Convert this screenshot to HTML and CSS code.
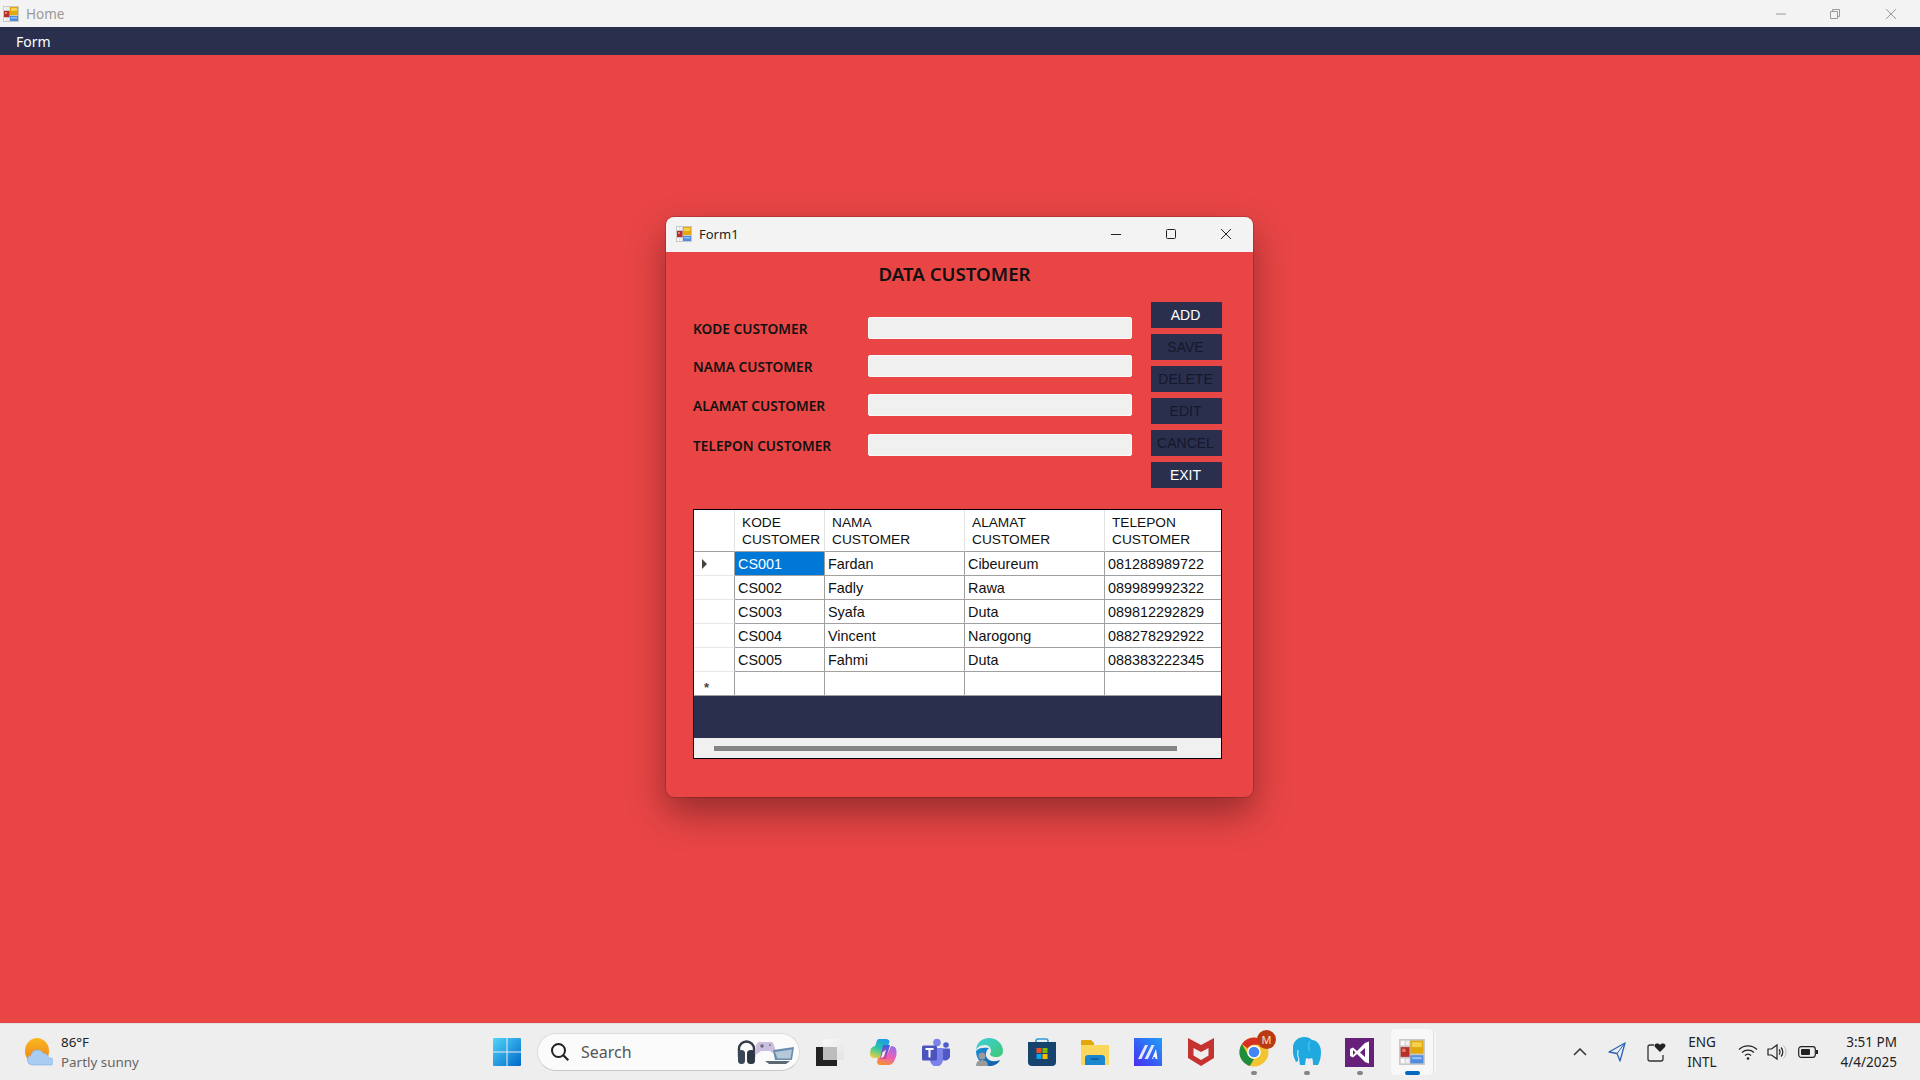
FILE: index.html
```html
<!DOCTYPE html>
<html lang="en">
<head>
    <meta charset="UTF-8" />
    <title>Home</title>
    <link rel="stylesheet" href="styles.css">
</head>
<body>
    <svg class="defs" width="0" height="0">
        <symbol id="appicon" viewBox="0 0 16 16">
            <rect x="0" y="0" width="16" height="16" fill="#c8c8c8"/>
            <rect x="1" y="1" width="2.500" height="3" fill="#fafafa"/>
            <rect x="4" y="1" width="2.500" height="3" fill="#eeeeee"/>
            <rect x="1" y="5" width="5.500" height="6" fill="#b8302a"/>
            <rect x="2" y="6" width="2" height="2" fill="#e88070"/>
            <rect x="1" y="12" width="2.500" height="3" fill="#fafafa"/>
            <rect x="4" y="12" width="2.500" height="3" fill="#eeeeee"/>
            <rect x="7" y="1" width="8" height="8" fill="#e2a80c"/>
            <rect x="8" y="2" width="6" height="3" fill="#f6d050"/>
            <rect x="7" y="10" width="8" height="5" fill="#4f8ce0"/>
            <rect x="8" y="11" width="6" height="1.500" fill="#90bcf0"/>
        </symbol>
    </svg>

    <div class="titlebar">
        <svg class="app-icon"><use href="#appicon"/></svg>
        <span class="titlebar-text">Home</span>
        <div class="main-controls">
            <span class="main-ctl"><svg width="12" height="12" viewBox="0 0 12 12"><path d="M1 6h10" stroke="#999" fill="none"/></svg></span>
            <span class="main-ctl"><svg width="12" height="12" viewBox="0 0 12 12"><path d="M1.500 3.500h7v7h-7zM3.500 3.500v-2h7v7h-2" stroke="#999" fill="none"/></svg></span>
            <span class="main-ctl"><svg width="12" height="12" viewBox="0 0 12 12"><path d="M1 1l10 10M11 1l-10 10" stroke="#999" fill="none"/></svg></span>
        </div>
    </div>
    <div class="menubar"><span class="menu-item">Form</span></div>

    <div class="desktop">
        <div class="window">
            <div class="win-title">
                <svg class="app-icon"><use href="#appicon"/></svg>
                <span class="win-title-text">Form1</span>
                <div class="win-controls">
                    <span class="win-ctl"><svg width="12" height="12" viewBox="0 0 12 12"><path d="M1 6.500h10" stroke="#222" fill="none"/></svg></span>
                    <span class="win-ctl"><svg width="12" height="12" viewBox="0 0 12 12"><rect x="1.500" y="1.500" width="9" height="9" rx="1" stroke="#222" fill="none"/></svg></span>
                    <span class="win-ctl"><svg width="12" height="12" viewBox="0 0 12 12"><path d="M1 1l10 10M11 1l-10 10" stroke="#222" fill="none"/></svg></span>
                </div>
            </div>
            <div class="win-body">
                <h1 class="heading">DATA CUSTOMER</h1>
                <div class="top-row">
                    <div class="fields">
                        <div class="field"><label>KODE CUSTOMER</label><input type="text" /></div>
                        <div class="field"><label>NAMA CUSTOMER</label><input type="text" /></div>
                        <div class="field"><label>ALAMAT CUSTOMER</label><input type="text" /></div>
                        <div class="field"><label>TELEPON CUSTOMER</label><input type="text" /></div>
                    </div>
                    <div class="buttons">
                        <button class="btn">ADD</button>
                        <button class="btn off">SAVE</button>
                        <button class="btn off">DELETE</button>
                        <button class="btn off">EDIT</button>
                        <button class="btn off">CANCEL</button>
                        <button class="btn">EXIT</button>
                    </div>
                </div>
                <div class="grid-box">
                    <table class="grid">
                        <colgroup>
                            <col class="c-head"><col class="c-kode"><col class="c-wide"><col class="c-wide"><col class="c-last">
                        </colgroup>
                        <thead>
                            <tr>
                                <th></th>
                                <th>KODE<br>CUSTOMER</th>
                                <th>NAMA<br>CUSTOMER</th>
                                <th>ALAMAT<br>CUSTOMER</th>
                                <th>TELEPON<br>CUSTOMER</th>
                            </tr>
                        </thead>
                        <tbody>
                            <tr><td class="rowhead"><span class="arrow"></span></td><td class="sel">CS001</td><td>Fardan</td><td>Cibeureum</td><td>081288989722</td></tr>
                            <tr><td class="rowhead"></td><td>CS002</td><td>Fadly</td><td>Rawa</td><td>089989992322</td></tr>
                            <tr><td class="rowhead"></td><td>CS003</td><td>Syafa</td><td>Duta</td><td>089812292829</td></tr>
                            <tr><td class="rowhead"></td><td>CS004</td><td>Vincent</td><td>Narogong</td><td>088278292922</td></tr>
                            <tr><td class="rowhead"></td><td>CS005</td><td>Fahmi</td><td>Duta</td><td>088383222345</td></tr>
                            <tr class="new-row"><td class="rowhead star">*</td><td></td><td></td><td></td><td></td></tr>
                        </tbody>
                    </table>
                    <div class="grid-empty"></div>
                    <div class="hscroll"><div class="thumb"></div></div>
                </div>
            </div>
        </div>
    </div>

    <div class="taskbar">
        <div class="weather">
            <svg width="28" height="28" viewBox="0 0 28 28">
                <defs><linearGradient id="sun" x1="0" y1="0" x2="0" y2="1"><stop offset="0" stop-color="#f8b820"/><stop offset="1" stop-color="#ee7d1c"/></linearGradient></defs>
                <ellipse cx="12" cy="13" rx="12" ry="13" fill="url(#sun)"/>
                <path d="M7 27a5 5 0 0 1-1-9.800a6.500 6.500 0 0 1 12-2a5 5 0 0 1 5.500 5a3.500 3.500 0 0 1 3 6.800z" fill="#a9cdf2" stroke="#7aaee8" stroke-width=".6"/>
            </svg>
            <div class="weather-text">
                <span class="temp">86°F</span>
                <span class="cond">Partly sunny</span>
            </div>
        </div>
        <div class="tile start">
            <svg width="28" height="28" viewBox="0 0 28 28">
                <defs><linearGradient id="win" x1="0" y1="0" x2="1" y2="1"><stop offset="0" stop-color="#52d5fb"/><stop offset="1" stop-color="#0068c8"/></linearGradient></defs>
                <path d="M0 1a1 1 0 0 1 1-1h12.500v13.500H0zM14.500 0H27a1 1 0 0 1 1 1v12.500H14.500zM0 14.500h13.500V28H1a1 1 0 0 1-1-1zM14.500 14.500H28V27a1 1 0 0 1-1 1H14.500z" fill="url(#win)"/>
            </svg>
        </div>
        <div class="search">
            <svg width="20" height="20" viewBox="0 0 20 20"><circle cx="8.500" cy="8.500" r="6.500" stroke="#222" stroke-width="2" fill="none"/><path d="M13.300 13.300l5 5" stroke="#222" stroke-width="2.200" fill="none"/></svg>
            <span class="search-text">Search</span>
            <svg class="hero" width="58" height="26" viewBox="0 0 58 26">
                <path d="M2 18v-8a7.500 7.500 0 0 1 15 0v8" stroke="#333b4a" stroke-width="2.400" fill="none"/>
                <rect x="1" y="11" width="7" height="14" rx="3.500" fill="#3b4656"/>
                <rect x="10" y="11" width="8" height="14" rx="3.500" fill="#2e3745"/>
                <path d="M19 6q2-4 5-3l8 0q4-1 5 3l2 7q0 3-2 2l-4-3h-9l-4 3q-3 1-2-2z" fill="#cbbfe0"/>
                <path d="M23 7h4M25 5v4" stroke="#555" stroke-width="1"/>
                <circle cx="33" cy="6" r="1" fill="#777"/>
                <path d="M36 11l21-3-2 13h-17z" fill="#6a8cae"/>
                <path d="M38 13l17-2.500-1.500 9h-13z" fill="#b4c8d8"/>
                <path d="M28 22h25l-4 3h-17z" fill="#5d6875"/>
            </svg>
        </div>
        <div class="tile">
            <svg width="28" height="28" viewBox="0 0 28 28">
                <defs><linearGradient id="tv" x1="0" y1="0" x2="1" y2="1"><stop offset="0" stop-color="#f8f8f8"/><stop offset="1" stop-color="#e4e4e4"/></linearGradient></defs>
                <rect x="0" y="9" width="21" height="19" fill="#222"/>
                <rect x="7" y="1" width="21" height="21" fill="url(#tv)"/>
                <rect x="7" y="9" width="14" height="13" fill="#bdbdbd"/>
            </svg>
        </div>
        <div class="tile">
            <svg width="28" height="28" viewBox="0 0 28 28">
                <defs>
                    <linearGradient id="cop1" x1=".6" y1="0" x2=".2" y2="1"><stop offset="0" stop-color="#1b9de8"/><stop offset=".5" stop-color="#2fc8a0"/><stop offset="1" stop-color="#f0d040"/></linearGradient>
                    <linearGradient id="cop2" x1=".7" y1="0" x2=".3" y2="1"><stop offset="0" stop-color="#9a70ea"/><stop offset=".5" stop-color="#e860b8"/><stop offset="1" stop-color="#f89030"/></linearGradient>
                    <linearGradient id="cop3" x1="0" y1="0" x2="0" y2="1"><stop offset="0" stop-color="#3a60e0"/><stop offset="1" stop-color="#e040a0"/></linearGradient>
                </defs>
                <path d="M10 1h7q3 0 3.500 2.500L15 20H6q-5.500 0-5-5l.5-3q.5-3 4.500-4l1.500-4Q8 1 10 1z" fill="url(#cop1)"/>
                <path d="M22 8q5 0 5.500 5t-1.500 8q-1.500 6-7 6h-8q-2.500 0-3-3l1-4h6q2 0 2.500-2z" fill="url(#cop2)"/>
                <path d="M14 7h7l-4 14h-6z" fill="url(#cop3)"/>
                <path d="M13.500 14.500l3.500-3-2 7-3 2z" fill="#f3eef6"/>
            </svg>
        </div>
        <div class="tile">
            <svg width="28" height="28" viewBox="0 0 28 28">
                <circle cx="15" cy="4.500" r="3.800" fill="#7b83eb"/>
                <circle cx="24" cy="7" r="2.800" fill="#5059c9"/>
                <path d="M19 10.500h8a1 1 0 0 1 1 1v7a5 5 0 0 1-8 3z" fill="#5059c9"/>
                <path d="M8 10h13v12a6 6 0 0 1-13 0z" fill="#7b83eb"/>
                <rect x="0" y="7.500" width="15" height="15" rx="1.500" fill="#4b53bc"/>
                <path d="M3.500 11h8M7.500 11v8.500" stroke="#fff" stroke-width="2" fill="none"/>
            </svg>
        </div>
        <div class="tile">
            <svg width="28" height="28" viewBox="0 0 28 28">
                <defs>
                    <linearGradient id="edg" x1="0" y1="0" x2="1" y2="1"><stop offset="0" stop-color="#3bd0e0"/><stop offset="1" stop-color="#40c870"/></linearGradient>
                    <linearGradient id="edg2" x1="0" y1="0" x2="1" y2="1"><stop offset="0" stop-color="#1a90d8"/><stop offset="1" stop-color="#0c59a4"/></linearGradient>
                </defs>
                <path d="M1 13C1 5 7 0 14 0c8 0 14 6 14 13 0 4-3 6-7 6-3 0-6-1-6-3 0-1 1-1 1-3 0-4-3-6-6-6-5 0-9 3-9 6z" fill="url(#edg)"/>
                <path d="M1 13c0 8 6 15 13 15 5 0 9-2 11-6-5 2-10 2-13-2-2-3-1-8 2-10-6-1-11 0-13 3z" fill="url(#edg2)"/>
                <circle cx="7" cy="18" r="3.500" fill="#9a9a9a"/>
                <path d="M1 28q0-6 6-6t6 6z" fill="#9a9a9a"/>
            </svg>
        </div>
        <div class="tile">
            <svg width="28" height="28" viewBox="0 0 28 28">
                <path d="M8 4V2.500A2 2 0 0 1 10 1h8a2 2 0 0 1 2 1.500V4" stroke="#2f9ad8" stroke-width="1.600" fill="none"/>
                <path d="M0 4h28v20a4 4 0 0 1-4 4H4a4 4 0 0 1-4-4z" fill="#17436f"/>
                <rect x="8.500" y="10" width="5" height="5" fill="#f25022"/>
                <rect x="14.500" y="10" width="5" height="5" fill="#7fba00"/>
                <rect x="8.500" y="16" width="5" height="5" fill="#00a4ef"/>
                <rect x="14.500" y="16" width="5" height="5" fill="#ffb900"/>
            </svg>
        </div>
        <div class="tile">
            <svg width="28" height="28" viewBox="0 0 28 28">
                <path d="M0 3a1 1 0 0 1 1-1h9l3 3v2H0z" fill="#e3a80f"/>
                <path d="M0 7h28v19a1 1 0 0 1-1 1H1a1 1 0 0 1-1-1z" fill="#fbd75b"/>
                <path d="M4 27v-7a3 3 0 0 1 3-3h14a3 3 0 0 1 3 3v7z" fill="#1a86d0"/>
                <path d="M10 21h8" stroke="#0c4f8a" stroke-width="1.200"/>
            </svg>
        </div>
        <div class="tile">
            <svg width="28" height="28" viewBox="0 0 28 28">
                <defs><linearGradient id="mm" x1="1" y1="0" x2="0" y2="1"><stop offset="0" stop-color="#1da0f8"/><stop offset="1" stop-color="#4a2cf0"/></linearGradient></defs>
                <rect width="28" height="28" fill="url(#mm)"/>
                <path d="M4 21l7-14h3L7.500 21zM10.500 21l7-14h3L14 21z" fill="#fff" opacity=".85"/>
                <path d="M18 21l4-10 1.500 10h-2l-.3-2h-1.500l-.7 2z" fill="#fff"/>
            </svg>
        </div>
        <div class="tile">
            <svg width="28" height="30" viewBox="0 0 28 30"><path d="M1 1l13 7 13-7v20L14 29 1 21zM6.500 11v7.500L14 23l7.500-4.500V11L14 15z" fill="#c4332f" fill-rule="evenodd"/></svg>
        </div>
        <div class="tile chrome">
            <svg width="30" height="30" viewBox="0 0 30 30">
                <circle cx="15" cy="15" r="14.500" fill="#f4c430"/>
                <path d="M15 .5a14.500 14.500 0 0 1 12.600 7.300H15a7 7 0 0 0-6.200 3.800L2.900 7A14.500 14.500 0 0 1 15 .5z" fill="#d93025"/>
                <path d="M2.900 7l6 10.500A7 7 0 0 0 15 22l-4.300 7A14.500 14.500 0 0 1 2.900 7z" fill="#1e8e3e"/>
                <circle cx="15" cy="15" r="6.800" fill="#fff"/>
                <circle cx="15" cy="15" r="5.300" fill="#4285f4"/>
            </svg>
            <span class="badge">M</span>
            <span class="dot"></span>
        </div>
        <div class="tile">
            <svg width="28" height="30" viewBox="0 0 28 30">
                <path d="M11 0c4 0 6 1 8 3 5 0 9 5 9 12 0 5-1 9-3 13h-5c0-3 0-5-1-7-2 1-4 1-6 0l-1 7H7l-1-6c-1 2-2 3-3 3-2-4-4-9-3-16C1 4 5 0 11 0z" fill="#1fa9e0"/>
                <path d="M17 4q-3 5 0 10" stroke="#3fc0ee" stroke-width="1.500" fill="none"/>
                <path d="M5 13q-1 6 1 10" stroke="#e8f6fc" stroke-width="1" fill="none"/>
            </svg>
            <span class="dot"></span>
        </div>
        <div class="tile">
            <svg width="29" height="29" viewBox="0 0 29 29">
                <rect width="29" height="29" fill="#68217a"/>
                <path d="M20 5l4-1.500v22L20 24l-8-8-4 3.500-3-1.500v-7l3-1.500 4 3.500zM20 10l-5 4.500 5 4.500zM8 12v5l2.500-2.500z" fill="#fff" fill-rule="evenodd"/>
            </svg>
            <span class="dot"></span>
        </div>
        <div class="tile active">
            <svg class="app-big"><use href="#appicon"/></svg>
            <span class="indicator"></span>
        </div>

        <div class="tray">
            <span class="tray-item w-chev"><svg width="14" height="8" viewBox="0 0 14 8"><path d="M1 7l6-6 6 6" stroke="#333" stroke-width="1.500" fill="none"/></svg></span>
            <span class="tray-item w-40"><svg width="18" height="20" viewBox="0 0 18 20"><path d="M17 1L1 10l8 1.500L12 19z" stroke="#2a62b8" stroke-width="1.300" fill="none" stroke-linejoin="round"/><path d="M9 11.500L17 1" stroke="#2a62b8" stroke-width="1"/></svg></span>
            <span class="tray-item w-40"><svg width="20" height="20" viewBox="0 0 20 20"><path d="M7 3H3a2 2 0 0 0-2 2v12a2 2 0 0 0 2 2h11a2 2 0 0 0 2-2v-4" stroke="#333" stroke-width="1.300" fill="none"/><path d="M13 10L8 5c-2-3 3-5 5-2 2-3 7-1 5 2z" fill="#222"/></svg></span>
            <span class="tray-item lang">ENG<br>INTL</span>
            <span class="tray-item w-wifi"><svg width="20" height="16" viewBox="0 0 20 16"><path d="M1 5.500a13 13 0 0 1 18 0M4 8.500a9 9 0 0 1 12 0M7 11.500a4.500 4.500 0 0 1 6 0" stroke="#222" stroke-width="1.300" fill="none"/><circle cx="10" cy="14.500" r="1.300" fill="#222"/></svg></span>
            <span class="tray-item w-spk"><svg class="spk" width="20" height="18" viewBox="0 0 20 18"><path d="M1 6h3.500L10 2v14l-5.500-4H1z" stroke="#222" stroke-width="1.200" fill="none"/><path d="M12 6.500a3.500 3.500 0 0 1 0 5M14 4.500a6.500 6.500 0 0 1 0 9" stroke="#222" stroke-width="1.200" fill="none"/><path d="M16.500 2.500a9.500 9.500 0 0 1 0 13" stroke="#bbb" stroke-width="1" fill="none"/></svg></span>
            <span class="tray-item w-bat"><svg width="20" height="12" viewBox="0 0 20 12"><rect x=".7" y=".7" width="16.600" height="10.600" rx="2.500" stroke="#222" stroke-width="1.200" fill="none"/><rect x="3" y="3" width="9" height="6" rx="1" fill="#222"/><rect x="18" y="4" width="2" height="4" fill="#222"/></svg></span>
            <span class="tray-item clock">3:51 PM<br>4/4/2025</span>
        </div>
    </div>
</body>
</html>
```
FILE: styles.css
```css
* {
    box-sizing: border-box;
}
html, body {
    height: 100%;
}
body {
    margin: 0;
    display: flex;
    flex-direction: column;
    overflow: hidden;
    font-family: "Noto Sans", "Open Sans", sans-serif;
    background-color: #e94545;
}
.defs {
    position: absolute;
}
.titlebar {
    height: 27px;
    background-color: #f3f3f3;
    display: flex;
    align-items: center;
    padding-left: 3px;
}
.app-icon {
    width: 16px;
    height: 16px;
}
.titlebar-text {
    margin-left: 7px;
    font-size: 13.5px;
    color: #999999;
}
.main-controls {
    margin-left: auto;
    display: flex;
    margin-right: 2px;
}
.main-ctl {
    width: 55px;
    display: flex;
    justify-content: center;
}
.main-ctl:nth-child(2) {
    margin-right: 1px;
    margin-left: -1px;
}
.menubar {
    height: 28px;
    background-color: #2b2f4e;
    display: flex;
    align-items: center;
    padding-left: 16px;
}
.menu-item {
    color: white;
    font-size: 14px;
}
.desktop {
    flex: 1;
    position: relative;
}
.window {
    position: absolute;
    left: 666px;
    top: 162px;
    width: 587px;
    height: 580px;
    background-color: #e94545;
    border-radius: 8px;
    box-shadow: 0 16px 36px rgba(0, 0, 0, 0.36), 0 0 0 1px rgba(120, 40, 40, 0.35);
    overflow: hidden;
}
.win-title {
    height: 35px;
    background-color: #f3f3f3;
    display: flex;
    align-items: center;
    padding-left: 10px;
    padding-bottom: 1px;
}
.win-title-text {
    margin-left: 7px;
    font-size: 13px;
    color: #222222;
}
.win-controls {
    margin-left: auto;
    display: flex;
}
.win-ctl {
    width: 55px;
    display: flex;
    justify-content: center;
}
.win-body {
    padding: 0 31px 0 27px;
}
.heading {
    margin: 5px 0 0;
    height: 45px;
    line-height: 34px;
    font-size: 18.7px;
    font-weight: 600;
    text-align: center;
    padding-right: 6px;
    color: #111111;
}
.top-row {
    display: flex;
    justify-content: space-between;
}
.fields {
    width: 439px;
    padding-top: 15px;
    display: flex;
    flex-direction: column;
    gap: 16px;
}
.field {
    height: 22px;
    display: flex;
    justify-content: space-between;
}
.field:nth-child(3) {
    margin-top: 1px;
}
.field:nth-child(4) {
    margin-top: 2px;
}
.field label {
    font-size: 13.7px;
    font-weight: 600;
    line-height: 23px;
    color: #111111;
}
.field input {
    width: 264px;
    height: 22px;
    background-color: #f0f0f0;
    border: 1px solid #f8f8f8;
    border-radius: 2px;
    padding: 0;
}
.buttons {
    display: flex;
    flex-direction: column;
    gap: 6px;
}
.btn {
    width: 71px;
    height: 26px;
    border: none;
    padding: 0 2px 0 0;
    background-color: #2b2f4e;
    color: white;
    font-family: "Liberation Sans", Arial, sans-serif;
    font-size: 14px;
}
.btn.off {
    color: #15172a;
}
.grid-box {
    margin-top: 21px;
    height: 250px;
    border: 1px solid black;
    background-color: #2b2f4e;
    display: flex;
    flex-direction: column;
}
.grid {
    width: 527px;
    table-layout: fixed;
    border-collapse: separate;
    border-spacing: 0;
    background-color: white;
    font-family: "Liberation Sans", Arial, sans-serif;
    font-size: 14.4px;
    color: #111111;
}
.c-head {
    width: 41px;
}
.c-kode {
    width: 90px;
}
.c-wide {
    width: 140px;
}
.c-last {
    width: 116px;
}
.grid th {
    height: 42px;
    padding: 1px 0 0 7px;
    font-size: 13.7px;
    font-weight: normal;
    line-height: 17px;
    text-align: left;
    white-space: nowrap;
    border-right: 1px solid #e2e2e2;
    border-bottom: 1px solid #a0a0a0;
}
.grid td {
    height: 24px;
    padding: 0 0 0 3px;
    line-height: 22px;
    white-space: nowrap;
    border-right: 1px solid #a0a0a0;
    border-bottom: 1px solid #a0a0a0;
}
.grid th:last-child, .grid td:last-child {
    border-right: none;
}
.grid td.rowhead {
    padding-left: 8px;
    border-bottom-color: #e8e8e8;
}
.grid .new-row td.rowhead {
    border-bottom-color: #a0a0a0;
}
.grid td.sel {
    background-color: #0078d7;
    color: white;
}
.arrow {
    display: block;
    width: 0;
    height: 0;
    border-left: 5px solid #444444;
    border-top: 5px solid transparent;
    border-bottom: 5px solid transparent;
}
.grid td.star {
    padding: 9px 0 0 10px;
    font-size: 13px;
    line-height: 14px;
    font-weight: bold;
    color: #444444;
}
.grid-empty {
    flex: 1;
}
.hscroll {
    height: 20px;
    background-color: #f0f0f0;
    padding: 8px 0 0 20px;
}
.thumb {
    width: 463px;
    height: 5px;
    background-color: #858585;
}
.taskbar {
    height: 57px;
    background-color: #eeeeee;
    border-top: 1px solid #e0e0e0;
    display: flex;
    align-items: center;
}
.weather {
    width: 480px;
    padding-left: 25px;
    display: flex;
    align-items: center;
    gap: 8px;
}
.weather-text {
    display: flex;
    flex-direction: column;
    font-size: 13.4px;
    line-height: 20px;
}
.temp {
    color: #222222;
}
.cond {
    color: #666666;
}
.tile {
    position: relative;
    width: 53px;
    height: 46px;
    display: flex;
    align-items: center;
    justify-content: center;
    flex-shrink: 0;
}
.start {
    margin-right: 4px;
}
.search {
    width: 263px;
    height: 38px;
    margin-right: 3px;
    background-color: #fbfbfb;
    border: 1px solid #dcdcdc;
    border-bottom-color: #c8c8c8;
    border-radius: 19px;
    display: flex;
    align-items: center;
    padding-left: 12px;
}
.search-text {
    margin-left: 11px;
    font-size: 16px;
    color: #555555;
}
.hero {
    margin-left: auto;
    margin-right: 4px;
}
.badge {
    position: absolute;
    top: 1px;
    left: 30px;
    width: 19px;
    height: 19px;
    border-radius: 50%;
    background-color: #bb3a12;
    color: #f5e0d0;
    font-size: 11px;
    line-height: 19px;
    text-align: center;
}
.dot {
    position: absolute;
    bottom: 0;
    left: 24px;
    width: 6px;
    height: 4px;
    border-radius: 2px;
    background-color: #858585;
}
.active {
    width: 42px;
    margin: 0 6px 0 5px;
    background-color: #f8f8f8;
    border-radius: 4px;
    box-shadow: 1px 0 0 #e0e0e0, 3px 0 0 #f4f4f4;
}
.app-big {
    width: 26px;
    height: 28px;
}
.indicator {
    position: absolute;
    bottom: 0;
    left: 14px;
    width: 15px;
    height: 4px;
    border-radius: 2px;
    background-color: #0067c0;
}
.tray {
    margin-left: auto;
    padding-right: 23px;
    display: flex;
    align-items: center;
    color: #222222;
    font-size: 13.5px;
}
.tray-item {
    display: flex;
    align-items: center;
    justify-content: center;
}
.w-chev {
    width: 34px;
}
.w-40 {
    width: 40px;
}
.lang {
    display: block;
    width: 50px;
    text-align: center;
    line-height: 20px;
}
.w-wifi {
    width: 42px;
}
.w-spk {
    width: 16px;
}
.spk {
    flex-shrink: 0;
}
.w-bat {
    width: 46px;
}
.clock {
    display: block;
    width: 66px;
    text-align: right;
    line-height: 20px;
    white-space: nowrap;
}
```
